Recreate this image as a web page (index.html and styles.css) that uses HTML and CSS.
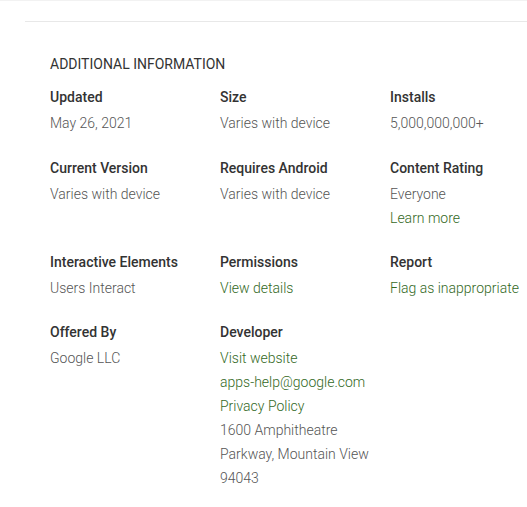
FILE: index.html
```html
<!DOCTYPE html>
<html>
<head>
<meta charset="utf-8">
<link rel="stylesheet" href="styles.css">
</head>
<body>
<div class="topline"></div>
<div class="divider"></div>
<section class="info">
  <h2 class="title">ADDITIONAL INFORMATION</h2>
  <div class="grid">
    <div class="cell first">
      <div class="label">Updated</div>
      <div class="value">May 26, 2021</div>
    </div>
    <div class="cell first">
      <div class="label">Size</div>
      <div class="value">Varies with device</div>
    </div>
    <div class="cell first">
      <div class="label">Installs</div>
      <div class="value">5,000,000,000+</div>
    </div>
    <div class="cell">
      <div class="label">Current Version</div>
      <div class="value">Varies with device</div>
    </div>
    <div class="cell">
      <div class="label">Requires Android</div>
      <div class="value">Varies with device</div>
    </div>
    <div class="cell">
      <div class="label">Content Rating</div>
      <div class="value">Everyone</div>
      <div class="value"><a class="link" href="#">Learn more</a></div>
    </div>
    <div class="cell">
      <div class="label">Interactive Elements</div>
      <div class="value">Users Interact</div>
    </div>
    <div class="cell">
      <div class="label">Permissions</div>
      <div class="value"><a class="link" href="#">View details</a></div>
    </div>
    <div class="cell">
      <div class="label">Report</div>
      <div class="value"><a class="link" href="#">Flag as inappropriate</a></div>
    </div>
    <div class="cell">
      <div class="label">Offered By</div>
      <div class="value">Google LLC</div>
    </div>
    <div class="cell">
      <div class="label">Developer</div>
      <div class="value"><a class="link" href="#">Visit website</a></div>
      <div class="value"><a class="link" href="#">apps-help@google.com</a></div>
      <div class="value"><a class="link" href="#">Privacy Policy</a></div>
      <div class="value dev-address">1600 Amphitheatre Parkway, Mountain View 94043</div>
    </div>
  </div>
</section>
</body>
</html>
```
FILE: styles.css
```css
html, body {
  margin: 0;
  padding: 0;
  background: #fff;
}
body {
  font-family: Roboto, "Liberation Sans", sans-serif;
  color: #333;
  overflow: hidden;
}
.topline {
  height: 1px;
  background: #f2f2f2;
}
.divider {
  margin: 20px 0 0 25px;
  border-top: 1px solid #e8e8e8;
}
.info {
  padding: 32px 0 0 50px;
}
.title {
  margin: 0 0 11px;
  font-size: 14px;
  font-weight: 400;
  line-height: 20px;
  color: #333;
}
.grid {
  display: grid;
  grid-template-columns: 170px 170px 1fr;
  row-gap: 20px;
}
.cell.first {
  margin-bottom: 1px;
}
.label {
  font-size: 14px;
  font-weight: 500;
  line-height: 24px;
  margin-bottom: 2px;
  color: #333;
}
.value {
  font-size: 14px;
  font-weight: 300;
  line-height: 24px;
  color: #555;
  white-space: nowrap;
}
.dev-address {
  white-space: normal;
  padding-right: 10px;
}
.link {
  color: #33691e;
  text-decoration: none;
}
```
